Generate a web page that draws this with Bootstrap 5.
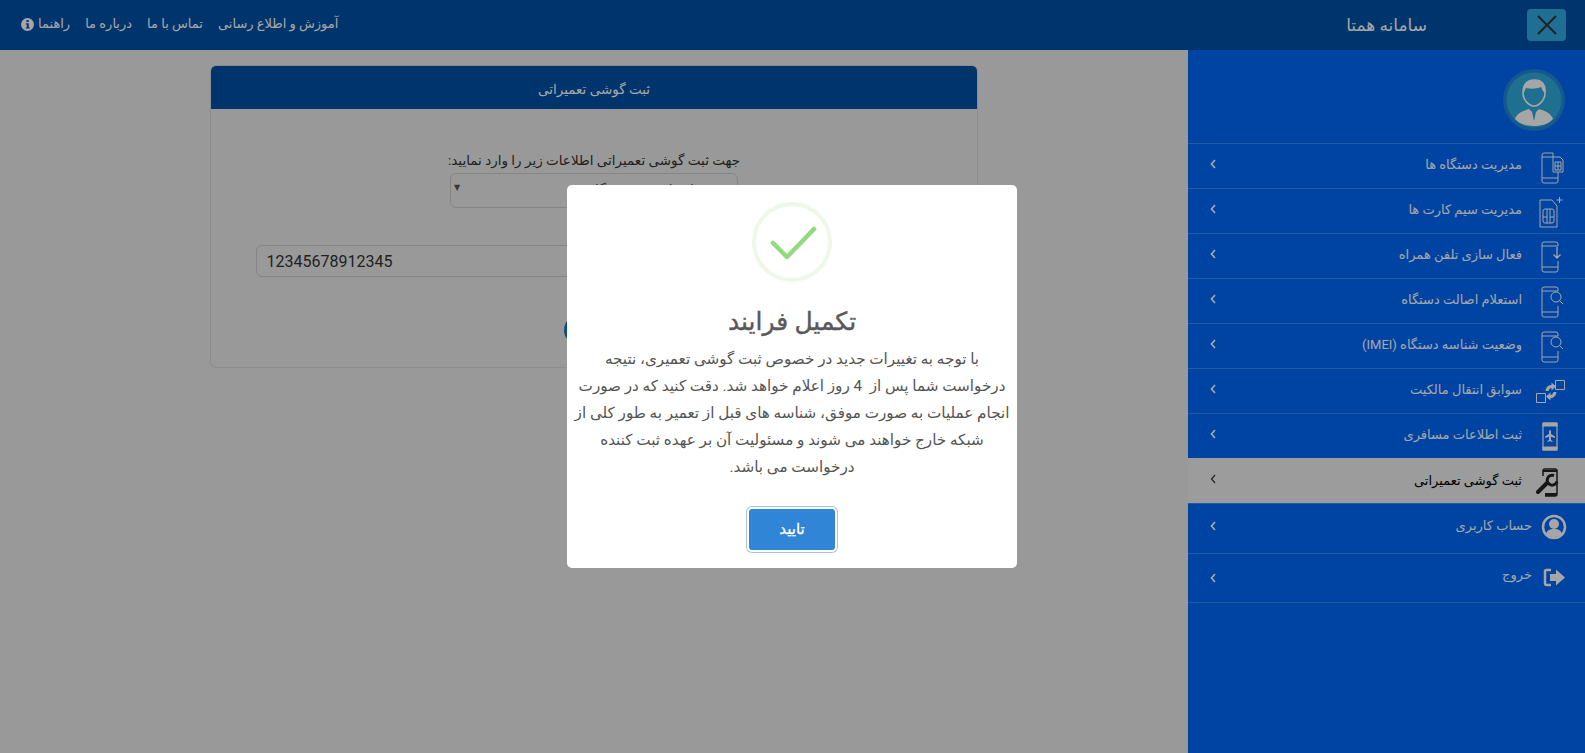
<!DOCTYPE html>
<html lang="fa" dir="rtl">
<head>
<meta charset="UTF-8">
<meta name="viewport" content="width=device-width, initial-scale=1.0">
<title>سامانه همتا</title>
<link href="https://cdn.jsdelivr.net/npm/bootstrap@5.3.3/dist/css/bootstrap.min.css" rel="stylesheet">
<style>
body {
    background: #ebebeb;
    font-family: Roboto, "DejaVu Sans", sans-serif;
    font-size: 13px;
    color: #333;
    height: 753px;
    overflow: hidden;
}

.top-head {
    height: 50px;
    background: #0050a8;
    color: #fff;
    padding: 0 19px 0 21px;
}

.close-box {
    width: 39px;
    height: 32px;
    background: #30abe5;
    border-radius: 4px;
}

.brand-text {
    font-size: 17px;
    margin: 2px 100px 0 0;
}

.top-links {
    gap: 15px;
    margin-top: -2px;
}

.top-links span {
    white-space: nowrap;
}

.main-area {
    flex: 1;
    min-width: 0;
}

.side-bar {
    width: 397px;
    height: 703px;
    background: #0069fb;
    flex: none;
    color: #fff;
}

.avatar-box {
    height: 93px;
    padding: 19px 20px 0 0;
}

.side-row {
    height: 45px;
    border-top: 1px solid rgba(255, 255, 255, .22);
    padding: 0 17px 0 22px;
    gap: 14px;
}

.side-row span {
    margin-top: -2px;
}

.side-row:last-child {
    border-bottom: 1px solid rgba(255, 255, 255, .22);
}

.side-row.active-row {
    background: #f0f0f0;
    color: #000;
    border-top-color: transparent;
}

.side-row.active-row span {
    margin-top: 0;
}

.side-row.tall-row {
    height: 50px;
    gap: 4px;
}

.side-row.tall-row span {
    margin-top: -6px;
}

.person-icon {
    margin-top: -3px;
}

.chevron-mark {
    margin-top: -5px;
}

.form-head {
    height: 43px;
    padding-bottom: 5px;
    background: #0050a8;
    color: #fff;
    font-size: 13.5px;
}

.form-box {
    margin-top: 15px;
    height: 303px;
    background: transparent;
    border-color: rgba(0, 0, 0, .08);
}

.form-box .form-label {
    margin-bottom: 2px;
    margin-top: 41px;
    line-height: 21px;
    font-size: 13.5px;
}

.select-wrap {
    width: 288px;
}

.select-wrap .form-select {
    height: 35px;
    background-image: none;
    background-color: transparent;
    border-color: #ccc;
    font-size: 14px;
    padding: 0 43px 0 12px;
    text-align: right;
    color: #444;
}

.caret-mark {
    position: absolute;
    left: 4px;
    top: 9px;
    font-size: 8px;
    color: #555;
}

.imei-input {
    width: 677px;
    height: 32px;
    margin-top: 37px;
    font-size: 16px;
    padding: 0 10px;
    background: transparent;
    border-color: #ccc;
    color: #333;
}

.send-btn {
    width: 60px;
    height: 30px;
    margin-top: 38px;
    border-radius: 15px;
    background: #0a78d8;
    border: 0;
}

.dim-layer {
    position: fixed;
    inset: 0;
    padding-right: 1px;
    background: rgba(0, 0, 0, .35);
}

.done-box {
    width: 450px;
    height: 383px;
    padding-top: 17px;
    border-radius: 5px;
    color: #545454;
}

.done-icon {
    display: block;
    margin: 0 auto;
}

.done-title {
    font-size: 25px;
    font-weight: 500;
    line-height: 40px;
    margin: 20px 0 4px;
    color: #595959;
    -webkit-text-stroke: .4px #595959;
}

.done-text {
    font-size: 15.2px;
    line-height: 27px;
    white-space: nowrap;
    margin-bottom: 28px;
}

.ok-btn {
    width: 86px;
    height: 41px;
    padding: 0;
    background: #3085d6;
    border: 0;
    border-radius: 3px;
    color: #fff;
    font-size: 15px;
    font-weight: 500;
    -webkit-text-stroke: .3px #fff;
    box-shadow: 0 0 0 2px #fff, 0 0 0 3px rgba(50, 100, 150, .4);
}
</style>
</head>
<body>
<header class="top-head d-flex align-items-center">
    <div class="close-box d-flex align-items-center justify-content-center">
        <svg width="22" height="22" viewBox="0 0 22 22"><path d="M2 2 20 20M20 2 2 20" stroke="#333" stroke-width="2" fill="none"/></svg>
    </div>
    <div class="brand-text">سامانه همتا</div>
    <div class="top-links d-flex align-items-center me-auto">
        <span>آموزش و اطلاع رسانی</span>
        <span>تماس با ما</span>
        <span>درباره ما</span>
        <span class="d-flex align-items-center gap-1">راهنما
            <svg width="13" height="13" viewBox="0 0 13 13"><circle cx="6.5" cy="6.5" r="6.5" fill="#fff"/><rect x="5.5" y="2" width="2.2" height="2" fill="#0050a8"/><path d="M4.8 5.2h3v4.2h1v1.2H4.8V9.4h1V6.4h-1z" fill="#0050a8"/></svg>
        </span>
    </div>
</header>

<div class="d-flex">
    <aside class="side-bar">
        <div class="avatar-box d-flex">
            <svg width="62" height="62" viewBox="0 0 62 62">
                <circle cx="31" cy="31" r="31" fill="#1f87dc"/>
                <circle cx="31" cy="31" r="27.5" fill="#30abde"/>
                <path d="M12 50c2-6 8-8 14-10l3 3 2 9 2-9 3-3c6 2 12 4 14 10-5 5-11 7-19 7s-14-2-19-7z" fill="#fff"/>
                <path d="M20 24c0-10 6-13 12-13s11 4 10 13c0 7-6 13-11 13s-11-6-11-13z" fill="none" stroke="#fff" stroke-width="1.6"/>
                <path d="M20 24c0-10 6-13 12-13s11 4 10 13c-3-2-3-5-4-6-4 2-12 2-15 1-1 1-1 4-3 5z" fill="#fff"/>
            </svg>
        </div>

        <div class="side-row d-flex align-items-center">
            <svg width="32" height="36" viewBox="0 0 32 36" fill="none" stroke="#fff">
                <path d="M17 9V5H8a2 2 0 0 0-2 2v26a2 2 0 0 0 2 2h12a2 2 0 0 0 2-2v-9M6 9h11M6 30h16"/>
                <path d="M17 9h7l3 3v12H17z"/><path d="M19 14h6v8h-6zM22 14v8M19 18h6"/>
            </svg>
            <span>مدیریت دستگاه ها</span>
            <svg class="chevron-mark me-auto" width="6" height="10" viewBox="0 0 6 10"><path d="M5 1 1.5 5 5 9" fill="none" stroke="#fff" stroke-width="1.7"/></svg>
        </div>

        <div class="side-row d-flex align-items-center">
            <svg width="32" height="36" viewBox="0 0 32 36" fill="none" stroke="#fff">
                <path d="M4 7h12l5 6v21H4z"/><path d="M7 18a2 2 0 0 1 2-2h7a2 2 0 0 1 2 2v10a2 2 0 0 1-2 2H9a2 2 0 0 1-2-2zM7 24h4M14 24h4M11 16v14M14 16v14"/>
                <path d="M23.500 4v6M20.500 7h6"/>
            </svg>
            <span>مدیریت سیم کارت ها</span>
            <svg class="chevron-mark me-auto" width="6" height="10" viewBox="0 0 6 10"><path d="M5 1 1.5 5 5 9" fill="none" stroke="#fff" stroke-width="1.7"/></svg>
        </div>

        <div class="side-row d-flex align-items-center">
            <svg width="32" height="36" viewBox="0 0 32 36" fill="none" stroke="#fff">
                <path d="M22 8V6a2 2 0 0 0-2-2H8a2 2 0 0 0-2 2v26a2 2 0 0 0 2 2h12a2 2 0 0 0 2-2v-9M6 8h16M6 29h16"/>
                <path d="M21 9v11M17.500 16.500 21 20l3.500-3.500" stroke-width="1.300"/>
            </svg>
            <span>فعال سازی تلفن همراه</span>
            <svg class="chevron-mark me-auto" width="6" height="10" viewBox="0 0 6 10"><path d="M5 1 1.5 5 5 9" fill="none" stroke="#fff" stroke-width="1.7"/></svg>
        </div>

        <div class="side-row d-flex align-items-center">
            <svg width="32" height="36" viewBox="0 0 32 36" fill="none" stroke="#fff">
                <path d="M22 8V6a2 2 0 0 0-2-2H8a2 2 0 0 0-2 2v26a2 2 0 0 0 2 2h12a2 2 0 0 0 2-2v-9M6 8h16M6 29h16"/>
                <circle cx="20" cy="14" r="5"/><path d="M23.500 17.500 27 21"/>
            </svg>
            <span>استعلام اصالت دستگاه</span>
            <svg class="chevron-mark me-auto" width="6" height="10" viewBox="0 0 6 10"><path d="M5 1 1.5 5 5 9" fill="none" stroke="#fff" stroke-width="1.7"/></svg>
        </div>

        <div class="side-row d-flex align-items-center">
            <svg width="32" height="36" viewBox="0 0 32 36" fill="none" stroke="#fff">
                <path d="M22 8V6a2 2 0 0 0-2-2H8a2 2 0 0 0-2 2v26a2 2 0 0 0 2 2h12a2 2 0 0 0 2-2v-9M6 8h16M6 29h16"/>
                <circle cx="20" cy="14" r="5"/><path d="M23.500 17.500 27 21"/>
            </svg>
            <span>وضعیت شناسه دستگاه (IMEI)</span>
            <svg class="chevron-mark me-auto" width="6" height="10" viewBox="0 0 6 10"><path d="M5 1 1.5 5 5 9" fill="none" stroke="#fff" stroke-width="1.7"/></svg>
        </div>

        <div class="side-row d-flex align-items-center">
            <svg width="32" height="36" viewBox="0 0 32 36" fill="none" stroke="#fff">
                <path d="M19.500 7.500h9v9h-9zM.5 20.500h9v9h-9z"/>
                <path d="M9.500 18c.5-4 3-6 6-6V9.500l4.500 4-4.500 4V15c-1.500 0-2.500 1.500-3 3z" fill="#fff" stroke="none"/>
                <path d="M20.500 19c-.5 4-3 6-6 6v2.500l-4.500-4 4.500-4V22c1.500 0 2.500-1.500 3-3z" fill="#fff" stroke="none"/>
            </svg>
            <span>سوابق انتقال مالکیت</span>
            <svg class="chevron-mark me-auto" width="6" height="10" viewBox="0 0 6 10"><path d="M5 1 1.5 5 5 9" fill="none" stroke="#fff" stroke-width="1.7"/></svg>
        </div>

        <div class="side-row d-flex align-items-center">
            <svg width="32" height="36" viewBox="0 0 32 36" fill="none" stroke="#fff" stroke-width="1.2">
                <rect x="7" y="5" width="14" height="27" rx="1"/>
                <path d="M7 5h14v3H7zM7 29h14v3H7z" fill="#fff"/>
                <path d="M14 12c.8 0 1 1 1 2v2l4 2.500V20l-4-1.300V22l1.500 1v1L14 23.300 11.500 24v-1l1.500-1v-3.300L9 20v-1.500l4-2.500v-2c0-1 .2-2 1-2z" fill="#fff" stroke="none"/>
            </svg>
            <span>ثبت اطلاعات مسافری</span>
            <svg class="chevron-mark me-auto" width="6" height="10" viewBox="0 0 6 10"><path d="M5 1 1.5 5 5 9" fill="none" stroke="#fff" stroke-width="1.7"/></svg>
        </div>

        <div class="side-row active-row d-flex align-items-center">
            <svg width="32" height="36" viewBox="0 0 32 36" fill="none" stroke="#222">
                <path d="M7 13V8a2 2 0 0 1 2-2h10a2 2 0 0 1 2 2v23a2 2 0 0 1-2 2H9" stroke-width="1.500"/>
                <path d="M7 7h14v2H7zM9 30h12v3H9z" fill="#222" stroke="none"/>
                <path d="M2 29 11 20" stroke-width="4" stroke-linecap="round"/>
                <path d="M18 12.500a5 5 0 1 0 3 6" stroke-width="3"/>
            </svg>
            <span>ثبت گوشی تعمیراتی</span>
            <svg class="chevron-mark me-auto" width="6" height="10" viewBox="0 0 6 10"><path d="M5 1 1.500 5 5 9" fill="none" stroke="#333" stroke-width="1.200"/></svg>
        </div>

        <div class="side-row tall-row d-flex align-items-center">
            <svg class="person-icon" width="32" height="36" viewBox="0 0 32 36">
                <circle cx="18" cy="18" r="11" fill="none" stroke="#fff" stroke-width="2.500"/>
                <circle cx="18" cy="15" r="5" fill="#fff"/>
                <path d="M10 25c1-4 4-5 8-5s7 1 8 5c-2 2-5 3-8 3s-6-1-8-3z" fill="#fff"/>
            </svg>
            <span>حساب کاربری</span>
            <svg class="chevron-mark me-auto" width="6" height="10" viewBox="0 0 6 10"><path d="M5 1 1.500 5 5 9" fill="none" stroke="#fff" stroke-width="1.700"/></svg>
        </div>

        <div class="side-row tall-row d-flex align-items-center">
            <svg width="32" height="36" viewBox="0 0 32 36">
                <path d="M15 10H10.500A1.500 1.500 0 0 0 9 11.500v12A1.500 1.500 0 0 0 10.500 25H15" fill="none" stroke="#fff" stroke-width="2.500"/>
                <path d="M14 14h6V9.500l9 8-9 8V21h-6z" fill="#fff"/>
            </svg>
            <span>خروج</span>
            <svg class="me-auto" width="6" height="10" viewBox="0 0 6 10"><path d="M5 1 1.500 5 5 9" fill="none" stroke="#fff" stroke-width="1.700"/></svg>
        </div>
    </aside>

    <main class="main-area container-fluid">
        <div class="row justify-content-center">
            <div class="col-8">
                <div class="card form-box">
                    <div class="card-header form-head text-center d-flex align-items-center justify-content-center border-0">ثبت گوشی تعمیراتی</div>
                    <div class="card-body d-flex flex-column align-items-center p-0">
                        <label class="form-label text-center">جهت ثبت گوشی تعمیراتی اطلاعات زیر را وارد نمایید:</label>
                        <div class="select-wrap position-relative">
                            <select class="form-select"><option>انتخاب نوع دستگاه</option></select>
                            <span class="caret-mark">▼</span>
                        </div>
                        <input class="form-control imei-input" dir="ltr" type="text" value="12345678912345">
                        <button class="btn send-btn" type="button"></button>
                    </div>
                </div>
            </div>
        </div>
    </main>
</div>

<div class="dim-layer d-flex align-items-center justify-content-center">
    <div class="done-box bg-white text-center">
        <svg class="done-icon" width="80" height="80" viewBox="0 0 80 80">
            <circle cx="40" cy="40" r="38" fill="none" stroke="#a5dc86" stroke-opacity=".2" stroke-width="4"/>
            <path d="M21 41 35 55 62 27" fill="none" stroke="#92d97f" stroke-width="4.500" stroke-linecap="round" stroke-linejoin="round"/>
        </svg>
        <h2 class="done-title">تکمیل فرایند</h2>
        <div class="done-text">
            با توجه به تغییرات جدید در خصوص ثبت گوشی تعمیری، نتیجه<br>
            درخواست شما پس از &nbsp;4 روز اعلام خواهد شد. دقت کنید که در صورت<br>
            انجام عملیات به صورت موفق، شناسه های قبل از تعمیر به طور کلی از<br>
            شبکه خارج خواهند می شوند و مسئولیت آن بر عهده ثبت کننده<br>
            درخواست می باشد.
        </div>
        <button class="btn ok-btn" type="button">تایید</button>
    </div>
</div>

<script src="https://cdn.jsdelivr.net/npm/bootstrap@5.3.3/dist/js/bootstrap.bundle.min.js"></script>
</body>
</html>
